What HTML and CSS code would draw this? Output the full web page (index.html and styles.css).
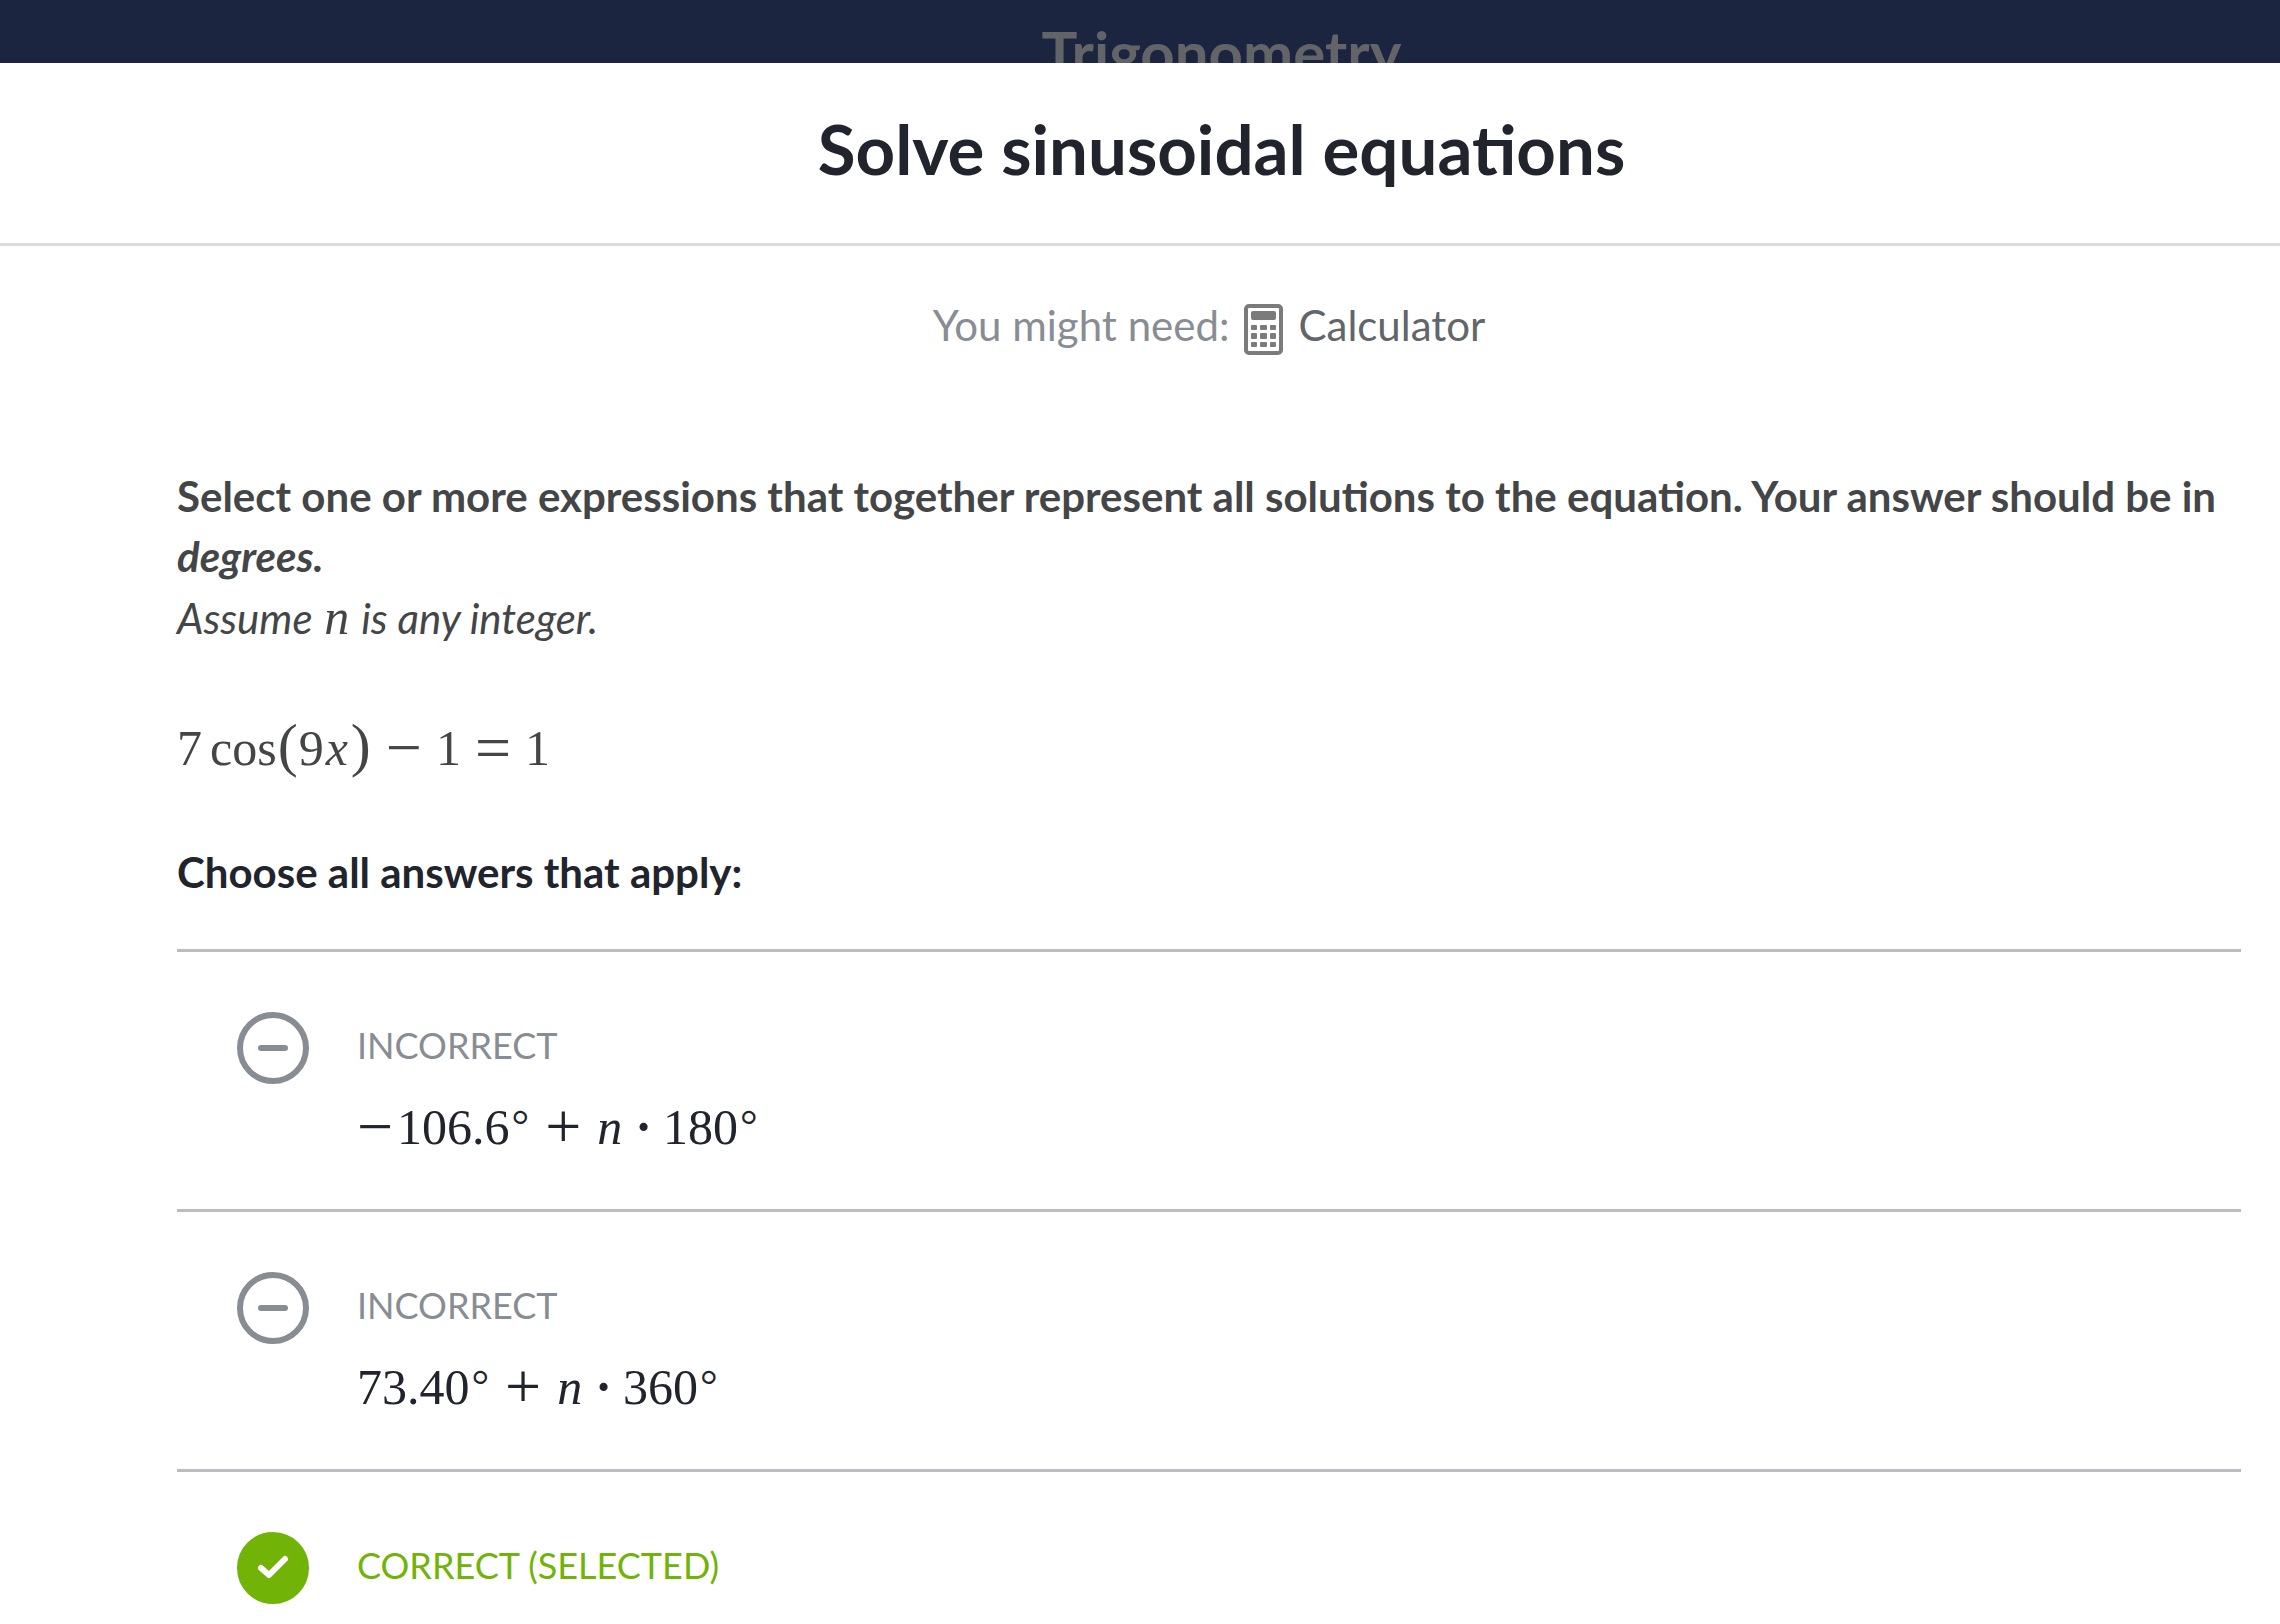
FILE: index.html
```html
<!DOCTYPE html>
<html lang="en">

<head>
  <meta charset="UTF-8">
  <meta name="viewport" content="width=device-width, initial-scale=1.0">
  <title>Solve sinusoidal equations</title>
  <link rel="stylesheet" href="styles.css">
</head>

<body>
  <div class="banner">
    <p class="course">Trigonometry</p>
  </div>

  <header class="title">
    <h1>Solve sinusoidal equations</h1>
  </header>

  <main class="exercise">
    <div class="tools">
      <span>You might need:</span>
      <button type="button" class="calculator">
        <svg class="calcicon" viewBox="0 0 39 51" aria-hidden="true">
          <rect class="case" x="2" y="2" width="35" height="47" rx="3" />
          <rect x="7" y="7" width="25" height="9" rx="2" />
          <rect x="7" y="21" width="6" height="5" rx="1" />
          <rect x="16" y="21" width="7" height="5" rx="1" />
          <rect x="26" y="21" width="6" height="5" rx="1" />
          <rect x="7" y="29" width="6" height="6" rx="1" />
          <rect x="16" y="29" width="7" height="6" rx="1" />
          <rect x="26" y="29" width="6" height="6" rx="1" />
          <rect x="7" y="38" width="6" height="5" rx="1" />
          <rect x="16" y="38" width="7" height="5" rx="1" />
          <rect x="26" y="38" width="6" height="5" rx="1" />
        </svg>
        <span>Calculator</span>
      </button>
    </div>

    <div class="question">
      <p class="prompt">Select one or more expressions that together represent all solutions to the equation. Your answer should be in <em>degrees.</em></p>
      <p class="assume">Assume <i class="math">n</i> is any integer.</p>
      <p class="equation math">7<span class="fn">cos</span><span class="paren">(</span>9<i>x</i><span class="paren">)</span><span class="op">−</span>1<span class="op">=</span>1</p>
    </div>

    <!-- marked answers -->
    <fieldset class="answers">
      <legend>Choose all answers that apply:</legend>

      <label class="answer">
        <span class="mark">
          <input type="checkbox" disabled>
          <svg viewBox="0 0 72 72" aria-hidden="true"><path d="M24 36H48" /></svg>
        </span>
        <span class="status">Incorrect</span>
        <span class="choice math"><span class="neg">−</span>106.6<span class="deg">°</span><span class="op">+</span><i>n</i><span class="dot">·</span>180<span class="deg">°</span></span>
      </label>

      <label class="answer">
        <span class="mark">
          <input type="checkbox" disabled>
          <svg viewBox="0 0 72 72" aria-hidden="true"><path d="M24 36H48" /></svg>
        </span>
        <span class="status">Incorrect</span>
        <span class="choice math">73.40<span class="deg">°</span><span class="op">+</span><i>n</i><span class="dot">·</span>360<span class="deg">°</span></span>
      </label>

      <label class="answer correct">
        <span class="mark">
          <input type="checkbox" checked disabled>
          <svg viewBox="0 0 72 72" aria-hidden="true"><path d="M24 36L32 43L48 27" /></svg>
        </span>
        <span class="status">Correct (selected)</span>
      </label>
    </fieldset>
  </main>
</body>

</html>
```
FILE: styles.css
```css
* {
  box-sizing: border-box;
}

body {
  margin: 0;
  background: #fff;
  color: #21242c;
  font-family: Lato, sans-serif;
  font-size: 42px;
  line-height: 60px;
}

h1,
p {
  margin: 0;
}

.banner {
  height: 63px;
  padding: 22px 0 0 163px;
  overflow: hidden;
  background: #1b2540;
  text-align: center;
}

.course {
  color: #636468;
  font-size: 60px;
  font-weight: bold;
}

.title {
  padding: 41px 0 49px 163px;
  border-bottom: 3px solid #d9dadc;
  text-align: center;
}

h1 {
  font-size: 69px;
  line-height: 90px;
}

.exercise {
  padding: 49px 39px 0 177px;
}

.tools {
  display: flex;
  justify-content: center;
  gap: 15px;
  color: #888d93;
}

.calculator {
  display: flex;
  align-items: center;
  gap: 15px;
  padding: 0;
  border: 0;
  background: none;
  color: #626569;
  font: inherit;
  cursor: pointer;
}

.calcicon {
  width: 39px;
  height: 51px;
  margin-top: 8px;
  fill: #7b7b7b;
}

.case {
  fill: none;
  stroke: #7b7b7b;
  stroke-width: 4;
}

.question {
  padding-top: 111px;
  color: #444547;
}

.prompt {
  font-weight: bold;
}

.assume {
  padding-top: 2px;
  font-style: italic;
}

.math {
  font-family: "Liberation Serif", serif;
  font-size: 50px;
}

.math i,
i.math {
  padding: 0 2px;
}

.assume .math {
  line-height: 40px;
}

.equation {
  padding: 70px 0 64px;
}

.fn {
  padding-left: 8px;
}

.paren {
  padding: 0 1px;
  font-size: 60px;
  line-height: 40px;
}

.op,
.neg {
  font-size: 64px;
  line-height: 40px;
  vertical-align: -4px;
}

.op {
  padding: 0 14px;
}

.neg {
  padding-right: 4px;
}

.deg {
  padding: 0 2px;
  font-size: 44px;
  line-height: 40px;
  vertical-align: 4px;
}

.dot {
  padding: 0 11px;
  font-weight: bold;
}

.answers {
  min-width: 0;
  margin: 0;
  padding: 0;
  border: 0;
}

legend {
  padding: 0 0 47px;
  font-weight: bold;
}

.answer {
  display: grid;
  grid-template-columns: 72px 1fr;
  column-gap: 48px;
  padding: 60px 60px 44px;
  border-top: 3px solid #babcc1;
}

.mark {
  display: grid;
  grid-row: 1 / 3;
  align-self: start;
}

.mark input {
  grid-area: 1 / 1;
  width: 72px;
  height: 72px;
  margin: 0;
  border: 6px solid #888d93;
  border-radius: 50%;
  appearance: none;
}

.mark svg {
  grid-area: 1 / 1;
  width: 72px;
  height: 72px;
  fill: none;
  stroke: #888d93;
  stroke-width: 6;
  stroke-linecap: round;
  stroke-linejoin: round;
}

.status {
  color: #888d93;
  font-size: 36px;
  line-height: 66px;
  text-transform: uppercase;
}

.choice {
  padding-top: 12px;
  line-height: 75px;
}

.correct {
  padding-bottom: 0;
}

.correct .status {
  color: #71b307;
}

.correct input {
  border-color: #71b307;
  background: #71b307;
}

.correct svg {
  stroke: #fff;
}
```
